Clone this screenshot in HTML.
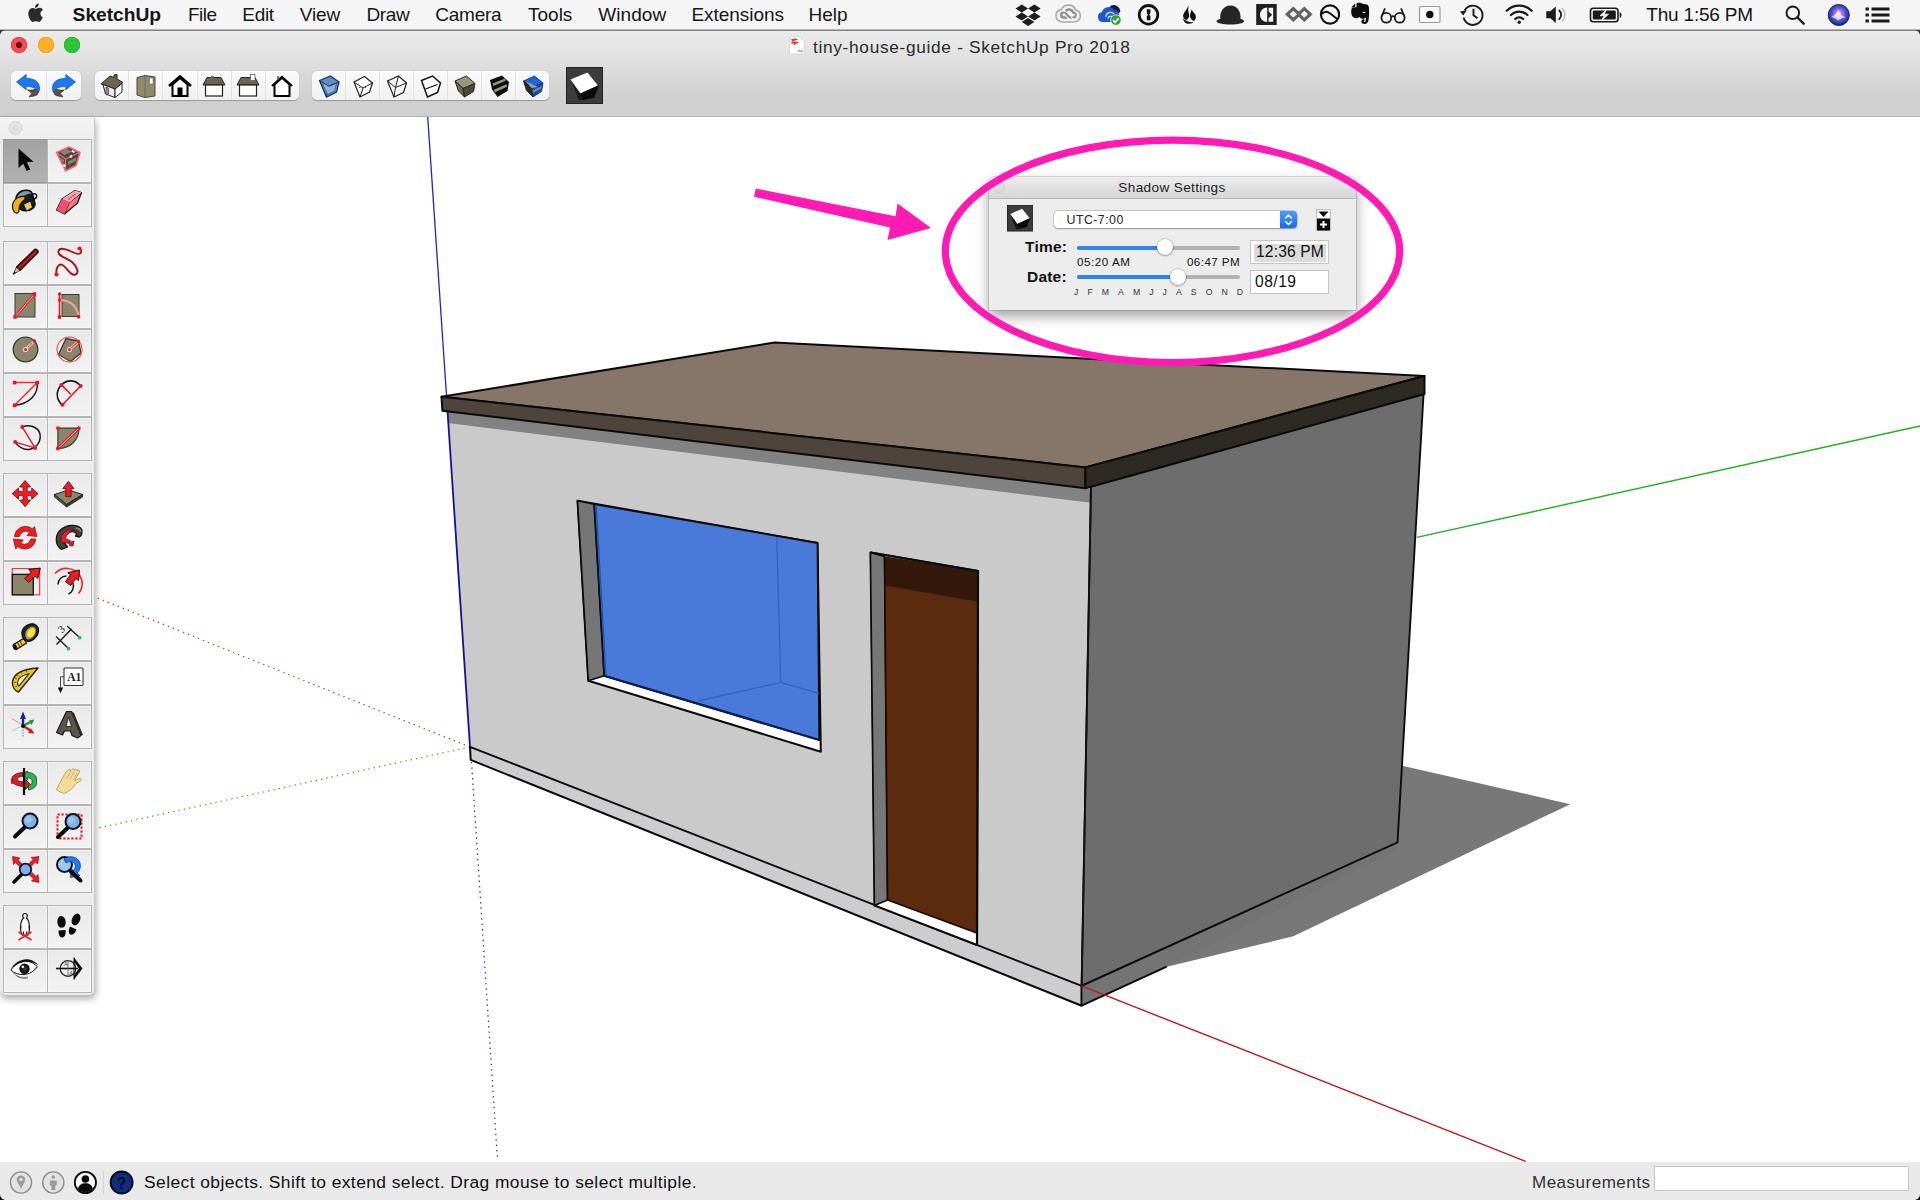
<!DOCTYPE html>
<html lang="en">
<head>
<meta charset="utf-8">
<title>tiny-house-guide - SketchUp Pro 2018</title>
<style>
*{box-sizing:border-box;margin:0;padding:0}
html,body{width:1920px;height:1200px;overflow:hidden;background:#fff;font-family:"Liberation Sans",sans-serif;color:#111}
.abs{position:absolute}
#menubar{position:absolute;left:0;top:0;width:1920px;height:30px;background:#f5f5f5;border-bottom:1px solid #b4b4b4}
#menubar .mi{position:absolute;top:3px;font-size:19px;line-height:24px;color:#151515;white-space:nowrap}
#menubar .mi.b{font-weight:bold}
#titlebar{position:absolute;left:0;top:30px;width:1920px;height:87px;background:linear-gradient(#ebebeb 0,#e3e3e3 22px,#d2d2d2 60px,#cfcfcf 100%);border-bottom:1px solid #b3b3b3;border-top:1px solid #858585}
.tl{position:absolute;top:6px;width:16px;height:16px;border-radius:50%}
#title{position:absolute;left:813px;top:5px;font-size:17.3px;line-height:22px;color:#2a2a2a;white-space:nowrap}
.tbgroup{position:absolute;top:40px;height:29px;border-radius:5px;background:linear-gradient(#fafafa,#f1f1f1);box-shadow:0 0.5px 1px rgba(0,0,0,.28);display:flex}
.tbgroup .c{flex:1;height:100%;border-right:1px solid #e2e2e2;position:relative}
.tbgroup .c:last-child{border-right:none}
.tbgroup svg{position:absolute;left:50%;top:50%;width:30px;height:28px;margin:-14px 0 0 -15px;overflow:visible}
#viewport{position:absolute;left:0;top:0;width:1920px;height:1200px}
#palette{position:absolute;left:0;top:118px;width:95px;height:878px;background:#ececec;border-right:1px solid #c9c9c9;border-bottom:1px solid #bdbdbd;border-radius:0 0 6px 6px;box-shadow:1px 3px 7px rgba(0,0,0,.32)}
#palette .ph{position:absolute;left:0;top:0;width:100%;height:20px;background:linear-gradient(#f4f4f4,#eeeeee)}
.pb{position:absolute;width:44.5px;height:44.5px;background:linear-gradient(#e9e9e9,#f1f1f1 80%,#f3f3f3);box-shadow:inset 0 0 0 1px #b4b4b4, inset 0 0 0 2px rgba(255,255,255,.35)}
.pb.sel{background:linear-gradient(#a2a2a2,#b2b2b2);box-shadow:inset 0 0 0 1px #9a9a9a}
.pb svg{position:absolute;left:0;top:0;width:44px;height:44px;overflow:visible}
#status{position:absolute;left:0;top:1162px;width:1920px;height:38px;background:#e9e9e9}
#status .txt{position:absolute;left:144px;top:8px;font-size:17.4px;line-height:24px;color:#111;white-space:nowrap}
#status .meas{position:absolute;left:1532px;top:9px;font-size:17px;line-height:24px;color:#333;white-space:nowrap}
#status .fld{position:absolute;left:1654px;top:3.500px;width:255px;height:25.500px;background:#fff;border:1px solid #c6c6c6}
#dlg{position:absolute;left:989px;top:177px;width:367px;height:133px;background:#ececec;border-radius:5px 5px 0 0;box-shadow:0 6px 14px rgba(0,0,0,.38),0 0 0 1px rgba(0,0,0,.12)}
#dlg .th{position:absolute;left:0;top:0;width:100%;height:22px;background:linear-gradient(#ececec,#d6d6d6);border-bottom:1px solid #b9b9b9;border-radius:5px 5px 0 0;text-align:center;font-size:13.6px;line-height:22px;color:#222}
#dlg .lbl{position:absolute;font-weight:bold;font-size:15.5px;line-height:18px;color:#111}
#dlg .sm{position:absolute;font-size:11.6px;line-height:14px;color:#111;white-space:nowrap}
#dlg .mo{position:absolute;font-size:8.7px;line-height:10px;color:#333;white-space:nowrap;letter-spacing:0}
#dlg .trk{position:absolute;height:4px;border-radius:2px;background:#b2b2b2}
#dlg .trk i{position:absolute;left:0;top:0;height:4px;border-radius:2px;background:#2f83f0}
#dlg .knob{position:absolute;width:16px;height:16px;border-radius:50%;background:#fff;box-shadow:0 0.5px 2px rgba(0,0,0,.5),0 0 0 .5px rgba(0,0,0,.15)}
#dlg .fld{position:absolute;left:261px;width:79px;height:24px;background:#fff;border:1px solid #c4c4c4;font-size:15.6px;line-height:22px;color:#111;white-space:nowrap}
.corner{position:absolute;width:6px;height:6px}
</style>
</head>
<body>
<svg id="viewport" width="1920" height="1200" viewBox="0 0 1920 1200">
<rect x="0" y="117" width="1920" height="1046" fill="#ffffff"/>
<!-- axes behind model -->
<line x1="427.7" y1="117" x2="447.6" y2="412" stroke="#2323c8" stroke-width="1.3"/>
<line x1="470" y1="746.9" x2="96" y2="597.5" stroke="#d23a3a" stroke-width="1.25" stroke-dasharray="1.4 4"/>
<line x1="470" y1="746.9" x2="96" y2="828.5" stroke="#2fb440" stroke-width="1.25" stroke-dasharray="1.4 4"/>
<line x1="471.5" y1="762" x2="497.5" y2="1160" stroke="#30309c" stroke-width="1.25" stroke-dasharray="1.4 4"/>
<line x1="1416.8" y1="537.4" x2="1920" y2="426" stroke="#1eb31e" stroke-width="1.4"/>
<!-- ground shadow -->
<polygon points="1400,765.2 1570.2,804.2 1293.3,936.3 1166.7,966.7 1081.6,1005.7 1081.6,985.9 1397.5,842.5" fill="#787878"/>
<!-- front wall -->
<polygon points="447.4,408 1091,487 1081.6,985.9 470,746.9" fill="#cacaca"/>
<!-- shadow band under fascia -->
<polygon points="446.8,410.7 1085.4,488.2 1091,489 1090.8,502.8 447.700,423" fill="#828282"/>
<!-- right wall -->
<polygon points="1091,485 1423.8,390 1397.5,842.5 1081.6,985.9" fill="#6d6d6d" stroke="#0d0d0d" stroke-width="1.900" stroke-linejoin="round"/>
<!-- base front -->
<polygon points="470,746.9 1081.6,985.9 1081.6,1005.7 470.7,759.9" fill="#cdcdd0" stroke="#0a0a0a" stroke-width="2" stroke-linejoin="round"/>
<!-- base right -->
<polygon points="1081.6,985.9 1397.5,842.5 1397.5,850 1166.7,966.7 1081.6,1005.7" fill="#747474"/>
<polyline points="1081.6,985.9 1397.5,842.5" fill="none" stroke="#0a0a0a" stroke-width="1.8"/>
<polyline points="1081.6,1005.7 1166.7,966.7" fill="none" stroke="#0a0a0a" stroke-width="2"/>
<line x1="1081.6" y1="985.9" x2="1081.6" y2="1005.7" stroke="#0a0a0a" stroke-width="1.6"/>
<!-- front wall edges -->
<line x1="1091" y1="489" x2="1081.6" y2="985.9" stroke="#111" stroke-width="1.8"/>
<line x1="447.6" y1="412" x2="470" y2="746.9" stroke="#14148c" stroke-width="1.8"/>
<!-- window -->
<polygon points="577.5,500.8 817.5,543 820.8,751.7 588.3,680.8" fill="#ffffff" stroke="#0a0a0a" stroke-width="2" stroke-linejoin="round"/>
<polygon points="577.5,500.8 594.2,504.2 604.2,675.8 588.3,680.8" fill="#767676" stroke="#0a0a0a" stroke-width="1.6" stroke-linejoin="round"/>
<polygon points="594.2,504.2 817.5,543 819.3,740 604.2,675.8" fill="#4a7ad9" stroke="#0a0a0a" stroke-width="1.8" stroke-linejoin="round"/>
<polyline points="596.2,506 606,675" fill="none" stroke="#1d4fb5" stroke-width="1.2"/>
<polyline points="776.7,537 780.8,682.5 698.3,700.8" fill="none" stroke="#2f5fc6" stroke-width="1.2"/>
<line x1="780.8" y1="682.5" x2="819.2" y2="693.3" stroke="#2f5fc6" stroke-width="1.2"/>
<line x1="604.2" y1="675.8" x2="819.3" y2="740" stroke="#0b1f55" stroke-width="2.2"/>
<!-- door -->
<polygon points="870.5,552.5 978,571 977,945 874.5,905.5" fill="#ffffff" stroke="#0a0a0a" stroke-width="2" stroke-linejoin="round"/>
<polygon points="870.5,552.5 884.5,556.5 887.5,900 874.5,905.5" fill="#777777" stroke="#0a0a0a" stroke-width="1.4" stroke-linejoin="round"/>
<polygon points="884.5,556.5 978,571 976.8,933 887.5,900" fill="#5c2a0e"/>
<polygon points="884.5,556.5 978,571 977.6,601.5 884.7,585.5" fill="#341809"/>
<polyline points="884.5,556.5 887.5,900 976.800,933" fill="none" stroke="#120702" stroke-width="1.600"/>
<polyline points="870.5,552.5 978,571 977,945" fill="none" stroke="#0a0a0a" stroke-width="2.2" stroke-linejoin="round"/>
<!-- roof -->
<polygon points="441.5,396.7 774.5,342.5 1424.5,376 1085.4,467.4" fill="#86766a" stroke="#0a0a0a" stroke-width="2" stroke-linejoin="round"/>
<polygon points="441.5,396.7 1085.4,467.4 1085.4,488.2 442.4,410.7" fill="#4e443b" stroke="#0a0a0a" stroke-width="2" stroke-linejoin="round"/>
<polygon points="1085.4,467.4 1424.5,376 1424.5,394 1085.4,488.2" fill="#2d2923" stroke="#0a0a0a" stroke-width="2" stroke-linejoin="round"/>
<!-- red axis in front -->
<line x1="1081.6" y1="985.9" x2="1525.6" y2="1161.3" stroke="#c01818" stroke-width="1.4"/>
</svg>

<div id="menubar">
<svg class="abs" style="left:27px;top:2px" width="19" height="22" viewBox="0 0 19 22"><path d="M13.1 0.4c.1 1.1-.3 2.200-1 3-.7.800-1.800 1.400-2.800 1.300-.1-1.100.4-2.200 1-2.900.700-.800 1.900-1.400 2.800-1.400zM16.600 7.400c-.1.100-1.900 1.100-1.900 3.300 0 2.600 2.300 3.500 2.300 3.500 0 .1-.4 1.300-1.200 2.500-.700 1.100-1.500 2.200-2.700 2.200s-1.500-.7-2.900-.7c-1.300 0-1.800.7-2.900.7s-1.900-1-2.800-2.300C3.500 15.100 2.600 12.700 2.600 10.400c0-3.700 2.400-5.600 4.700-5.600 1.200 0 2.300.8 3 .8.700 0 1.900-.9 3.300-.9.500 0 2.400.100 3.600 1.900z" fill="#2b2b2b" transform="translate(-1.300 1.100)"/></svg>
<span class="mi b" style="left:72.6px;font-size:19.2px">SketchUp</span>
<span class="mi" style="left:188px;letter-spacing:-.5px">File</span>
<span class="mi" style="left:242.300px;letter-spacing:-.3px">Edit</span>
<span class="mi" style="left:299.800px;letter-spacing:-.15px">View</span>
<span class="mi" style="left:366.500px;letter-spacing:-.400px">Draw</span>
<span class="mi" style="left:435.300px;letter-spacing:-.25px">Camera</span>
<span class="mi" style="left:528px">Tools</span>
<span class="mi" style="left:598.200px;letter-spacing:.08px">Window</span>
<span class="mi" style="left:691.500px;letter-spacing:-.06px">Extensions</span>
<span class="mi" style="left:808.500px">Help</span>
<span class="mi" style="left:1646.300px;letter-spacing:-.2px">Thu 1:56 PM</span>
<!-- status icons -->
<svg class="abs" style="left:1010px;top:0" width="900" height="30" viewBox="1010 0 900 30">
<!-- dropbox -->
<g fill="#1d1d1d"><path d="M1021.800 4.600l6.300 4-6.300 4-6.300-4zM1034.400 4.600l6.300 4-6.300 4-6.300-4zM1015.500 16.600l6.300-4 6.300 4-6.300 4zM1034.400 12.600l6.300 4-6.300 4-6.300-4zM1021.800 21.900l6.300-4 6.300 4-6.300 4z"/></g>
<!-- creative cloud (gray) -->
<path d="M1062.800 22c-3.800 0-6.800-2.800-6.800-6.300 0-3 2.200-5.500 5.200-6.100 1.300-2.700 4-4.500 7.200-4.500 3.300 0 6.100 2 7.300 4.800 2.700.8 4.600 3.200 4.600 6 0 3.400-2.800 6.100-6.300 6.100z" fill="#f3f3f3" stroke="#adadad" stroke-width="1.700"/>
<path d="M1063.300 18.800a3.700 3.700 0 0 1-.5-7.300c1.800-.3 3.300.5 4.500 1.800l5 5.300c-1.200.3-2.800.2-3.800-.8l-3.800-4c-.8-.8-2.200-.3-2.200 1 0 1 .7 1.500 1.500 1.500h1.500l2.200 2.500zM1073.500 18.500c2-.2 3.400-1.700 3.400-3.600 0-1.700-1.200-3.200-2.900-3.500-1-2.300-3.200-3.400-5.400-3.200-1.500.2-2.700.8-3.600 1.800l1.800 1.900c.8-.9 2-1.400 3.200-1 1.300.4 2.200 1.500 2.300 2.800l1.300.1c.7.1 1.200.6 1.200 1.300s-.6 1.300-1.300 1.300h-2.300z" fill="#8f8f8f"/>
<!-- blue cloud w/ check -->
<path d="M1108 9.500c1-3 4-5 7-4.300 3.300.7 5.500 3.500 5.300 6.800l-5 3z" fill="#0d1f4f"/>
<path d="M1102.800 22a5 5 0 0 1-.8-9.900a6.700 6.700 0 0 1 12-2.200c3 .2 5.200 2.300 5.200 5.200 0 1-.2 1.800-.6 2.500l-3.600 4.400z" fill="#1d56d6"/>
<path d="M1106 16.800a4.500 4.500 0 0 1 7.800-3M1108 18.500a2.600 2.600 0 0 1 4.200-1.700" fill="none" stroke="#e6efff" stroke-width="1.300"/>
<circle cx="1115.900" cy="20" r="5.300" fill="#2aa82a" stroke="#f3f3f3" stroke-width=".8"/>
<path d="M1113 20.200l2.100 2.200 3.600-4.200" fill="none" stroke="#fff" stroke-width="1.700"/>
<!-- 1password -->
<circle cx="1148.500" cy="14.800" r="9.300" fill="none" stroke="#111" stroke-width="2.800"/>
<path d="M1146.800 9.300h3.600v4l-1.200 1.300 1.200 1.300v4.400h-3.600v-4.100l1.200-1.300-1.200-1.300z" fill="#111"/>
<!-- flame -->
<path d="M1187.800 4.200c.8 2.500-.5 4.200-2.300 6.500-1.800 2.300-3 4.500-2 7 .6 1.300 1.700 2 3.300 2.400 1.800-1.500 2.600-3.300 2.300-5.500-.3-2.200-1.200-3.800-.8-5.800.2-1.500.2-3-.5-4.600z" fill="#111"/>
<path d="M1191.300 9.200c.2 1.800-.5 3-1 4.500-.6 1.800-.3 3.800.8 5.300.7 1 1.800 1.800 3 1.800 1.500-1.300 2.100-3 1.600-5.200-.5-2.300-3.200-3.800-4.400-6.400z" fill="#111"/>
<path d="M1183 18.500c.3 3 2.800 5.300 6 5.300 2.200 0 3.800-.8 4.800-2-3 .8-6.300.3-8.300-1.500-1-.6-1.900-1.200-2.500-1.800z" fill="#111"/>
<path d="M1186.500 21.300c1.500.8 3.200 1 5 .6-.8.800-1.800 1.200-3 1.100-.8-.1-1.600-.7-2-1.700z" fill="#111"/>
<!-- hat -->
<path d="M1220.300 19c-.8-7 3-13.500 10.200-13.500s10.800 6.500 10 13.500c2 .4 3.600 1.200 3.600 2.300 0 2-6.200 3.200-13.700 3.200s-13.900-1.200-13.900-3.200c0-1.100 1.700-1.900 3.800-2.300z" fill="#262626"/>
<!-- square dark icon -->
<rect x="1256.200" y="4" width="20.500" height="21" fill="#1f1f1f"/>
<path d="M1267.200 7.500v14.500c-4.200 0-7.200-3.200-7.200-7.200s3-7.300 7.200-7.300z" fill="#f6f6f6"/>
<path d="M1268.600 7.800h4.600v14h-4.600v-3.500l3.500-3.500-3.500-3.500z" fill="#f6f6f6"/>
<!-- link gray -->
<path d="M1287.300 14.200l6-5.600 5.500 5.200 5.500-5.200 6 5.600-6 5.600-5.500-5.200-5.500 5.200z" fill="none" stroke="#636363" stroke-width="3.200" stroke-linejoin="miter"/>
<!-- circle arc -->
<circle cx="1330" cy="14.500" r="9.100" fill="none" stroke="#111" stroke-width="2.100"/>
<path d="M1321.800 14c2.500-2.800 5.500-3 8.500-.5l7.500 6" fill="none" stroke="#111" stroke-width="1.900"/>
<!-- evernote -->
<path d="M1356.500 3.300c2-.8 5-.6 6.500.8 1.200-.2 3.200 0 4.500.7 1 .6 1.400 2 1.500 4 .2 3.500.2 8-.5 11.500-.4 2-1.500 3.500-3.500 3.600-1.800.1-3.200-.3-3.600-1.600-.3-1.200.3-2.600 1.500-3 .9-.2 1.700.3 1.700 1.100 0 .6-.5 1-1.200.9.100.6.700.8 1.300.7.800-.2 1.100-1 1.100-2v-2.500c-.8 1-2 1.300-3.400 1.200-1.200 0-2.200-.6-2.600-1.600-1.300 1-3.200 1.400-5 .9-2.300-.6-3.300-2.500-3.500-5-.2-2 0-4 .7-5.600l3.700-.2c.6 0 .9-.3.900-.9z" fill="#0d0d0d"/>
<path d="M1351.400 7.200l3.800-3.800.1 3c0 .4-.3.700-.7.700z" fill="#0d0d0d"/>
<rect x="1362.800" y="11.800" width="2.600" height="1.100" fill="#f3f3f3"/>
<!-- glasses -->
<g fill="none" stroke="#1b1b1b" stroke-width="1.800"><circle cx="1386.300" cy="17.800" r="4.900"/><circle cx="1399.700" cy="17.800" r="4.900"/><path d="M1391.200 17c1-1.200 2.600-1.200 3.600 0M1381.600 16.500l3.400-8.200M1404.400 16.500l-3.400-8.200"/></g>
<!-- record -->
<rect x="1419.500" y="6.500" width="20.500" height="16" rx="1.500" fill="#fafafa" stroke="#9a9a9a" stroke-width="1.200"/>
<circle cx="1429.800" cy="14.500" r="3.700" fill="#111"/>
<!-- time machine -->
<g fill="none" stroke="#1b1b1b" stroke-width="1.900"><path d="M1464.600 10.500a9.600 9.600 0 1 1-1 7"/><path d="M1473.500 8.800v6.500l4 3"/></g>
<path d="M1460 11.500l6.800-1.200-3.600 5.200z" fill="#1b1b1b"/>
<!-- wifi -->
<g fill="none" stroke="#1b1b1b" stroke-width="2.300" stroke-linecap="round"><path d="M1506.800 10.800a17.500 17.500 0 0 1 24.800 0"/><path d="M1511 15a11.500 11.500 0 0 1 16.400 0"/><path d="M1515.200 19a5.600 5.600 0 0 1 8 0"/></g>
<circle cx="1519.200" cy="22.300" r="1.700" fill="#1b1b1b"/>
<!-- volume -->
<path d="M1546.300 11.300h4l5.500-4.800v16.500l-5.500-4.800h-4z" fill="#1b1b1b"/>
<path d="M1559.300 10.500a6 6 0 0 1 0 8.600" fill="none" stroke="#1b1b1b" stroke-width="1.800" stroke-linecap="round"/>
<path d="M1562.500 8.500a9.500 9.500 0 0 1 0 12.500" fill="none" stroke="#bdbdbd" stroke-width="1.600" stroke-linecap="round"/>
<!-- battery -->
<rect x="1590.500" y="8.300" width="27.500" height="13.500" rx="2.800" fill="none" stroke="#1b1b1b" stroke-width="1.600"/>
<path d="M1619.700 12.200c1.300.3 1.800 1.300 1.800 2.800s-.5 2.500-1.800 2.800z" fill="#1b1b1b"/>
<rect x="1592.800" y="10.600" width="23" height="8.900" rx="1.200" fill="#1b1b1b"/>
<path d="M1606.500 9.500l-6.500 6.200h4.200l-2.700 5 7-6.500h-4.300z" fill="#f3f3f3" stroke="#f3f3f3" stroke-width=".8"/>
<!-- search -->
<circle cx="1792.800" cy="12.800" r="6.300" fill="none" stroke="#1b1b1b" stroke-width="2"/>
<path d="M1797.500 17.500l6.200 6.200" stroke="#1b1b1b" stroke-width="2.400" stroke-linecap="round"/>
<!-- siri -->
<defs><radialGradient id="siri" cx=".5" cy=".45" r=".6"><stop offset="0" stop-color="#fff"/><stop offset=".25" stop-color="#d86bd0"/><stop offset=".55" stop-color="#3c5be0"/><stop offset="1" stop-color="#12124a"/></radialGradient></defs>
<circle cx="1838.800" cy="15" r="10.600" fill="url(#siri)" stroke="#1a1a3a" stroke-width=".8"/>
<path d="M1831 17c3-1 5-3 7.500-7.500 1 5 3.500 7 8 7.800-4 .5-6.500 1-8.500 3.500-1.500-2.500-4-3.300-7-3.800z" fill="#ffffff" opacity=".75"/>
<!-- list -->
<g fill="#1b1b1b"><rect x="1865.500" y="7.500" width="3.400" height="3"/><rect x="1865.500" y="13.500" width="3.400" height="3"/><rect x="1865.500" y="19.500" width="3.400" height="3"/><rect x="1871.500" y="7.500" width="18" height="3"/><rect x="1871.500" y="13.500" width="18" height="3"/><rect x="1871.500" y="19.500" width="18" height="3"/></g>
</svg>
</div>

<div id="titlebar">
<div class="tl" style="left:10.700px;background:#fc4a4d;box-shadow:inset 0 0 0 .6px #d93236"><i style="position:absolute;left:5px;top:5px;width:6px;height:6px;border-radius:50%;background:#5a0d0d"></i></div>
<div class="tl" style="left:37.500px;background:#fdb225;box-shadow:inset 0 0 0 .6px #dd9a1c"></div>
<div class="tl" style="left:64.100px;background:#29c732;box-shadow:inset 0 0 0 .6px #1da926"></div>
<svg class="abs" style="left:788px;top:5px" width="18" height="19" viewBox="0 0 18 19"><path d="M1.500.5h10l5 5v12.500h-15z" fill="#fdfdfd" stroke="#cfcfcf" stroke-width=".8"/><path d="M3 3.500c3-1.500 6-1 7 .5-2 0-4 .5-5 1.500 2-.3 4.500 0 6 1.500-2.500 0-4 1-4.500 2.500l-1-2c-1 .2-2 .1-3-.5 1-.5 1.800-1 2-1.800-.8-.4-1.300-1-1.500-1.700z" fill="#e5342e"/><text x="9" y="15.500" font-family="Liberation Sans, sans-serif" font-size="4" fill="#666">skp</text></svg>
<div id="title"><span style="font-size:17.300px;letter-spacing:.68px">tiny-house-guide - SketchUp Pro 2018</span></div>
<!-- group 1 -->
<div class="tbgroup" style="left:11px;width:70px">
<div class="c"><svg viewBox="0 0 30 28"><path d="M14.500 17.800c4.500.8 8.500 0 11.300-3 .6 3.200-.2 6-2 8.200-2 1-4.500 1.600-7.800 1.800l2.800-3.300z" fill="#5e5243" stroke="#2a241c" stroke-width=".6" stroke-linejoin="round"/><path d="M3.500 10l9.700-7.600v4.100c8-.5 13.300 3.500 13.300 9.500 0 1.800-.4 3.300-1.200 4.800-1-4-5-6.500-12.100-6.300v3.300z" fill="#1b78f2" stroke="#0f4fae" stroke-width=".7" stroke-linejoin="round"/></svg></div>
<div class="c"><svg viewBox="0 0 30 28"><path d="M15.500 17.800c-4.500.8-8.500 0-11.300-3-.6 3.200.2 6 2 8.200 2 1 4.500 1.600 7.800 1.800l-2.800-3.300z" fill="#5e5243" stroke="#2a241c" stroke-width=".6" stroke-linejoin="round"/><path d="M26.500 10l-9.700-7.600v4.100c-8-.5-13.300 3.500-13.300 9.500 0 1.800.4 3.300 1.200 4.800 1-4 5-6.500 12.100-6.300v3.300z" fill="#1b78f2" stroke="#0f4fae" stroke-width=".7" stroke-linejoin="round"/></svg></div>
</div>
<!-- group 2 -->
<div class="tbgroup" style="left:95px;width:204px">
<div class="c"><svg viewBox="0 0 30 28"><path d="M4 12l9-8 4 1.500v-2.500l3-.5v4.500l6 3.500-8 6.500z" fill="#6e6353" stroke="#222" stroke-width="1"/><path d="M6 12.500l2.500 9.500 9.500 3.500v-8.500z" fill="#f4f4f4" stroke="#222" stroke-width="1"/><path d="M18 17l7-5.500v8.500l-7 5.500z" fill="#fff" stroke="#222" stroke-width="1"/><path d="M9 15l2.500 1v6l-2.500-1z" fill="#999" stroke="#222" stroke-width=".6"/></svg></div>
<div class="c"><svg viewBox="0 0 30 28"><path d="M6 5.500l8-2 10 1.500v19l-10 1.500-8-2.500z" fill="#8e8a6e" stroke="#4a4638" stroke-width="1"/><path d="M14 3.500v22" stroke="#6a664f" stroke-width=".8"/><rect x="18.500" y="6" width="3.500" height="6" fill="#fff" stroke="#555" stroke-width=".5"/></svg></div>
<div class="c"><svg viewBox="0 0 30 28"><path d="M4 14l11-9.500 11 9.500" fill="none" stroke="#000" stroke-width="2.600" stroke-linejoin="miter"/><path d="M7.500 12.500v11.500h15v-11.500l-7.500-6.500z" fill="#fff" stroke="#000" stroke-width="2"/><rect x="12.500" y="15.500" width="5" height="8.500" fill="#000"/></svg></div>
<div class="c"><svg viewBox="0 0 30 28"><path d="M4 13l4-7.500h14l4 7.500z" fill="#6e6353" stroke="#2c261e" stroke-width="1"/><rect x="6.500" y="13" width="17" height="11" fill="#fff" stroke="#222" stroke-width="1.200"/><rect x="12" y="3.800" width="3" height="2" fill="#777"/></svg></div>
<div class="c"><svg viewBox="0 0 30 28"><path d="M4 13l4-7.500h14l4 7.500z" fill="#6e6353" stroke="#2c261e" stroke-width="1"/><rect x="6.500" y="13" width="17" height="11" fill="#fff" stroke="#222" stroke-width="1.200"/><rect x="17.500" y="2.500" width="4.500" height="6" fill="#fff" stroke="#555" stroke-width=".7"/></svg></div>
<div class="c"><svg viewBox="0 0 30 28"><path d="M5 14l10-9 10 9" fill="none" stroke="#000" stroke-width="2.200"/><path d="M7.500 12.500v11.500h15v-11.500l-7.500-6.800z" fill="#fff" stroke="#000" stroke-width="2"/><path d="M11 4v4" stroke="#555" stroke-width="1.600"/></svg></div>
</div>
<!-- group 3 -->
<div class="tbgroup" style="left:312px;width:237px">
<div class="c"><svg viewBox="0 0 30 28"><path d="M5.500 8.500l11-4.500 8.500 6-2.500 10-10 5z" fill="#5d8fc4" stroke="#17355c" stroke-width="1.300"/><path d="M5.500 8.500l9 5.500 10.500-4M14.500 14l-2 11" fill="none" stroke="#17355c" stroke-width="1"/><path d="M8 10.500l7 4 7.500-3-2 7.500-7 3.500z" fill="#8db5df" stroke="#24486f" stroke-width=".6"/></svg></div>
<div class="c"><svg viewBox="0 0 30 28"><path d="M6 10l10.500-5.500 8 6.500-3 9-9.500 5z" fill="#fff" stroke="#222" stroke-width="1.200"/><path d="M6 10l9 6 9.500-5M15 16l-3 9" fill="none" stroke="#222" stroke-width="1"/><path d="M11 15.500h7" stroke="#444" stroke-width="1" stroke-dasharray="1.500 1.500"/></svg></div>
<div class="c"><svg viewBox="0 0 30 28"><path d="M5.500 9l11-5 8 7-3 9.500-9.500 4.500z" fill="#fdfdfd" stroke="#222" stroke-width="1.200"/><path d="M5.500 9l8 6.500 11-4.500M13.500 15.500l-1.500 9.500M16.500 4l-3 11.500" fill="none" stroke="#222" stroke-width="1"/></svg></div>
<div class="c"><svg viewBox="0 0 30 28"><path d="M5.500 8.500l11-4.500 8 7-3 9.500-10 4.500z" fill="#fff" stroke="#111" stroke-width="1.500"/><path d="M9.500 17l12-4.500" fill="none" stroke="#111" stroke-width="1.200"/></svg></div>
<div class="c"><svg viewBox="0 0 30 28"><path d="M5 9l11.500-5 8.500 7.500-12 5z" fill="#9a9479" stroke="#2a271c" stroke-width="1"/><path d="M5 9l8 7.500 1.500 8.500-6-6z" fill="#6f6a52" stroke="#2a271c" stroke-width="1"/><path d="M13 16.500l12-5-1.500 8-9 5.500z" fill="#4e4a38" stroke="#2a271c" stroke-width="1"/></svg></div>
<div class="c"><svg viewBox="0 0 30 28"><path d="M6 8l12-4.500 7 6.500-1.500 9-10 6-5.500-7.500z" fill="#0c0c0c"/><path d="M8.500 11.500l12.500-5 .8 2.300-12.500 5.200zM10 17.800l12.500-5.500.5 2.500-12.300 5.700z" fill="#9a9479"/></svg></div>
<div class="c"><svg viewBox="0 0 30 28"><path d="M5.500 9l11-5 8.500 7-11.500 5z" fill="#1b66e0" stroke="#0b2a66" stroke-width=".8"/><path d="M5.500 9l8 7 1.500 9-6.500-6.500z" fill="#2d2a22" stroke="#111" stroke-width=".8"/><path d="M13.500 16l11.500-5-1.500 8.500-8.500 5.500z" fill="#0e4fb8" stroke="#0b2a66" stroke-width=".8"/><path d="M8 9.500l12 5.500-6.500 1z" fill="#a59f84"/><path d="M14.500 18.500l9-4.200-.5 2.500-8.300 4z" fill="#8d876d"/></svg></div>
</div>
<!-- shadow icon -->
<svg class="abs" style="left:566px;top:36px" width="37" height="37" viewBox="0 0 37 37"><rect x=".5" y=".5" width="36" height="36" fill="#3c3c3c" stroke="#222" stroke-width="1"/><path d="M5 13l17-6.500 11 12.500-5 12-15 2.500z" fill="#1a1a1a"/><path d="M4.500 12.500l17-7 10.500 13-17.500 8z" fill="#fff"/><path d="M14.500 26.500l17.500-8-4 12-11 2.500z" fill="#0a0a0a"/></svg>
</div>

<div id="palette"><div class="ph"><svg width="95" height="20" viewBox="0 0 95 20" style="position:absolute;left:0;top:0"><circle cx="15.500" cy="10" r="6.500" fill="#e3e3e3" stroke="#d2d2d2" stroke-width="1"/><circle cx="15.500" cy="10" r="2.500" fill="none" stroke="#d8d8d8" stroke-width="1"/></svg></div>
<div class="pb sel" style="left:3px;top:20.5px"><svg viewBox="0 0 44 44"><path d="M15.500 9.500l0 19.500 4.800-4.300 3.300 7.300 3.600-1.600-3.300-7.200 6.600-.5z" fill="#0a0a0a"/></svg></div>
<div class="pb" style="left:47.25px;top:20.5px"><svg viewBox="0 0 44 44"><path d="M9.500 13.500l12.500-5.500 11 5.500-4 13-10.500 5.500z" fill="#4a4940" stroke="#f26a7a" stroke-width="1.600" stroke-linejoin="round"/><path d="M9.500 13.500l9 6.500 14-6.500M18.500 20l0 12" fill="none" stroke="#f26a7a" stroke-width="1.200"/><path d="M13 13l7-3 5 2.500-7.500 3.500z" fill="#8a866b"/><path d="M12.500 18l4.500 3v3l-4-3z" fill="#8a866b"/><path d="M21 22.500l8.500-4-1 3.500-7.500 4z" fill="#8a866b"/><circle cx="17" cy="26.500" r="1.500" fill="#fff"/><circle cx="24" cy="17.500" r="1.300" fill="#fff"/><path d="M25 11l3 1.500-1 1.500-2.500-1.300z" fill="#fff"/></svg></div>
<div class="pb" style="left:3px;top:64.5px"><svg viewBox="0 0 44 44"><path d="M13 17c-1-5 4-10 10-10 4 0 6 2 6.500 4l2.500 9c1 4-4 8-9 8-4 0-7-2-7.500-4z" fill="#1b1a22" stroke="#000" stroke-width="1.200"/><path d="M14 15c1-4 5-7 9-7 3 0 5 1.200 5.500 2.500-3 0-8 1.500-11 5z" fill="#7d99ad"/><path d="M20.500 21.500l7-3.500 2 6.500-6 3.500z" fill="#e6c978" stroke="#000" stroke-width=".8"/><path d="M29 11.500c3-2 5.500 0 4.500 2.500-.5 1.500-2 2-3 2" fill="none" stroke="#111" stroke-width="1.500"/><path d="M22 13.500c-6-1-12 3-12.500 9-.3 4 1.500 7 3.500 7.500 1.500.3 3-.5 3-2.500 0-3 1-7 4-9.500 1.500-1.200 3-2 2-4.500z" fill="#f3b012" stroke="#111" stroke-width="1.200"/></svg></div>
<div class="pb" style="left:47.25px;top:64.5px"><svg viewBox="0 0 44 44"><path d="M9.500 27l5.500-11 13-8.500 6.500 2-4 10.500-13 11z" fill="#f4768a" stroke="#1a1a1a" stroke-width="1.300" stroke-linejoin="round"/><path d="M15 16l7.500 3.500 12-9.500M22.500 19.500l-5 11.500" fill="none" stroke="#1a1a1a" stroke-width="1"/><path d="M9.500 27l5.500-11 7.500 3.500-5 11.500z" fill="#f0506a"/><path d="M15 16l13-8.500 6.500 2-12 10z" fill="#f8a3b0"/><path d="M21.500 16.500l7-5.500" stroke="#b03a4c" stroke-width="1.400" stroke-dasharray="1.500 1"/></svg></div>
<div class="pb" style="left:3px;top:122.5px"><svg viewBox="0 0 44 44"><path d="M10 33.500l3.500-7.500 3.800 3.300z" fill="#d9b98a" stroke="#222" stroke-width=".7"/><path d="M10 33.500l1.500-3 1.500 1.300z" fill="#111"/><path d="M13.500 26l18-17.500c1.500-1.200 4.500 1.500 3.500 3l-17.700 17.800z" fill="#8c0f12" stroke="#150303" stroke-width="1.100"/><path d="M15.500 27.500l18-17.500" stroke="#d9393d" stroke-width="1"/></svg></div>
<div class="pb" style="left:47.25px;top:122.5px"><svg viewBox="0 0 44 44"><path d="M9.500 33.500c-1-6 2-11.500 6-9.500 4.500 2.500 8 11.500 13 9.500 4-1.500 1.500-8-3.500-12.500-5-4-15-6-13.500-11 1.500-4.500 10-1 15 1.500 6 3 10 .5 6.500-4" fill="none" stroke="#a5151a" stroke-width="1.900" stroke-linecap="round"/><circle cx="9.500" cy="33.500" r="2.100" fill="#e8151b"/><circle cx="32.500" cy="7.500" r="2.100" fill="#e8151b"/></svg></div>
<div class="pb" style="left:3px;top:166.5px"><svg viewBox="0 0 44 44"><rect x="12" y="8.500" width="20" height="23.500" fill="#8a866b" stroke="#3d3b2e" stroke-width="1"/><path d="M12 32l19.500-23" stroke="#e8151b" stroke-width="2.600"/><path d="M12 32l19.500-23" stroke="#ffc9cc" stroke-width=".9"/><rect x="10.300" y="30.300" width="3.400" height="3.400" fill="#e8151b"/><rect x="29.800" y="7.300" width="3.400" height="3.400" fill="#e8151b"/></svg></div>
<div class="pb" style="left:47.25px;top:166.5px"><svg viewBox="0 0 44 44"><rect x="15" y="9.500" width="17" height="22" fill="#8a866b" stroke="#3d3b2e" stroke-width="1"/><path d="M12.500 15c10 0 18 6 19 16.500" fill="none" stroke="#f5a3a8" stroke-width="2"/><path d="M12.500 9v23" stroke="#e8151b" stroke-width="1.600"/><circle cx="12.500" cy="9" r="1.700" fill="#e8151b"/><circle cx="12.500" cy="15" r="1.700" fill="#e8151b"/><circle cx="12.500" cy="32" r="1.900" fill="#e8151b"/><circle cx="31.500" cy="31.700" r="1.900" fill="#e8151b"/></svg></div>
<div class="pb" style="left:3px;top:210.5px"><svg viewBox="0 0 44 44"><circle cx="22.500" cy="20.500" r="12.300" fill="#8a866b" stroke="#3d3b2e" stroke-width="1.300"/><path d="M22.500 20.500l9-8.500" stroke="#f7b5b8" stroke-width="2.600"/><path d="M22.500 20.500l9-8.500" stroke="#e8151b" stroke-width="1" stroke-dasharray="2 1.500"/><circle cx="22.500" cy="20.500" r="2.600" fill="#ffd0d3"/><circle cx="22.500" cy="20.500" r="1.500" fill="#e8151b"/><circle cx="31.500" cy="12" r="1.700" fill="#e8151b"/></svg></div>
<div class="pb" style="left:47.25px;top:210.5px"><svg viewBox="0 0 44 44"><path d="M19 9.500l12.500 2.500 2.500 12-10.500 8.500-12-7z" fill="#8a866b" stroke="#3d3b2e" stroke-width="1.300" stroke-linejoin="round"/><circle cx="22.500" cy="20.500" r="12.500" fill="none" stroke="#ee4a52" stroke-width="1.100"/><path d="M22.500 20.500l9-8" stroke="#f7b5b8" stroke-width="2.600"/><path d="M22.500 20.500l9-8" stroke="#e8151b" stroke-width="1"/><circle cx="22.500" cy="20.500" r="2.600" fill="#ffd0d3"/><circle cx="22.500" cy="20.500" r="1.500" fill="#e8151b"/><circle cx="31.500" cy="12.500" r="1.700" fill="#e8151b"/></svg></div>
<div class="pb" style="left:3px;top:254.5px"><svg viewBox="0 0 44 44"><path d="M34.300 9.600c1 12-8 21.500-22.700 22.700" fill="none" stroke="#1a1a1a" stroke-width="1.500"/><path d="M11.600 9.600h22.700l-22.700 22.700" fill="none" stroke="#ee2a31" stroke-width="1.500"/><rect x="9.800" y="7.800" width="3.600" height="3.600" fill="#e8151b"/><rect x="32.500" y="7.800" width="3.600" height="3.600" fill="#e8151b"/><rect x="9.800" y="30.500" width="3.600" height="3.600" fill="#e8151b"/></svg></div>
<div class="pb" style="left:47.25px;top:254.5px"><svg viewBox="0 0 44 44"><path d="M15.500 31.700c-6-4-7.500-13-1.100-19.800 6-6 14.500-5 19.200 1.100" fill="none" stroke="#1a1a1a" stroke-width="1.600"/><path d="M33.600 13l-18.100 18.700M14.400 11.900l9.300 9.300" fill="none" stroke="#e8151b" stroke-width="1.500"/><circle cx="14.400" cy="11.900" r="2" fill="#e8151b"/><circle cx="33.600" cy="13" r="2" fill="#e8151b"/><circle cx="15.500" cy="31.700" r="2" fill="#e8151b"/></svg></div>
<div class="pb" style="left:3px;top:298.5px"><svg viewBox="0 0 44 44"><path d="M19.200 9.900c9-3.500 19 1.500 18 11-1 10.500-15 17.500-25 4.200" fill="none" stroke="#1a1a1a" stroke-width="1.500"/><path d="M19.200 9.900l12.800 21-19.800-5.800" fill="none" stroke="#e8151b" stroke-width="1.400"/><circle cx="19.200" cy="9.900" r="2" fill="#e8151b"/><circle cx="12.200" cy="25.100" r="2" fill="#e8151b"/><circle cx="32" cy="30.900" r="2.100" fill="#e8151b"/></svg></div>
<div class="pb" style="left:47.25px;top:298.5px"><svg viewBox="0 0 44 44"><path d="M10.900 11.100h21c.5 11.500-8 20-21 20.400z" fill="#8a866b" stroke="#3d3b2e" stroke-width="1.200"/><path d="M31.900 11.100l-21 20.400" stroke="#e8151b" stroke-width="2.800"/><path d="M31.900 11.100l-21 20.400" stroke="#ffc9cc" stroke-width="1"/><circle cx="10.900" cy="11.100" r="1.900" fill="#e8151b"/><circle cx="31.900" cy="11.100" r="1.900" fill="#e8151b"/><circle cx="10.900" cy="31.500" r="1.900" fill="#e8151b"/></svg></div>
<div class="pb" style="left:3px;top:354.5px"><svg viewBox="0 0 44 44"><path d="M22.100 7.500l5.500 6.500h-3.300v4.400h4.400v-3.400l6.300 5.600-6.300 5.600v-3.400h-4.400v4.400h3.300l-5.500 6.500-5.500-6.500h3.300v-4.400h-4.400v3.400l-6.300-5.600 6.300-5.600v3.400h4.400v-4.400h-3.300z" fill="#ee1c23" stroke="#6a0a0c" stroke-width=".8" stroke-linejoin="round"/><rect x="17" y="15.500" width="2.400" height="2.400" fill="#fff"/><rect x="24.800" y="15.500" width="2.400" height="2.400" fill="#fff"/><rect x="17" y="23.300" width="2.400" height="2.400" fill="#fff"/><rect x="24.800" y="23.300" width="2.400" height="2.400" fill="#fff"/></svg></div>
<div class="pb" style="left:47.25px;top:354.5px"><svg viewBox="0 0 44 44"><path d="M7.400 21.500l14-4.500 14.200 4.500-16 10z" fill="#8a866b" stroke="#222" stroke-width="1"/><path d="M7.400 21.500v2.500l12.200 10v-2.500z" fill="#55523f" stroke="#222" stroke-width=".8"/><path d="M19.600 31.500l16-10v2.500l-16 10z" fill="#3f3d2f" stroke="#222" stroke-width=".8"/><path d="M21.400 8.400l5.600 7.200h-3v8h-5.200v-8h-3z" fill="#ee1c23" stroke="#6a0a0c" stroke-width=".9" stroke-linejoin="round"/></svg></div>
<div class="pb" style="left:3px;top:398.5px"><svg viewBox="0 0 44 44"><path d="M11.500 19.500c.5-6 5.500-10.500 11.500-10 3 .2 5 1.200 6.500 2.500l2-2.500 2.500 10-10-1 2.500-3c-3-2.200-8-1.700-10 4z" fill="#ee1c23" stroke="#7a0d10" stroke-width=".7" stroke-linejoin="round"/><path d="M32.800 22c-.5 6-5.500 10.500-11.500 10-3-.2-5-1.200-6.500-2.500l-2 2.500-2.500-10 10 1-2.500 3c3 2.200 8 1.700 10-4z" fill="#ee1c23" stroke="#7a0d10" stroke-width=".7" stroke-linejoin="round"/></svg></div>
<div class="pb" style="left:47.25px;top:398.5px"><svg viewBox="0 0 44 44"><path d="M14.500 32.500c-7-5-7-15 0-20.500 6-4.500 15-5 19.500-.5 2 2 1 7.500-1.500 8.500l-4-1c1.500-1.500 1-3.500-1-4-5-1.500-12 3-10 11l3 4z" fill="#45433a" stroke="#14130f" stroke-width="1.300" stroke-linejoin="round"/><path d="M14 22c0-6 7-11 14-9.500-4 .5-9 4.500-9.500 9.500l5 1.500-1.500 2 5-1.500-1 5-4-.5 1.500-2-9-1z" fill="#ee1c23" stroke="#5a0a0c" stroke-width=".7"/><path d="M28.500 11.500c2-1 5.500.5 5 3.500" fill="none" stroke="#8a866b" stroke-width="1.500"/></svg></div>
<div class="pb" style="left:3px;top:442.5px"><svg viewBox="0 0 44 44"><rect x="9.300" y="7.600" width="27.400" height="26.200" fill="none" stroke="#ee2a31" stroke-width="1.100"/><rect x="9.300" y="13.400" width="21" height="20.400" fill="#8a866b" stroke="#1a1a1a" stroke-width="1.400"/><path d="M37.300 7l-2.500 10.500-2.500-2.500-6.500 6.500-4-4 6.500-6.500-2.500-2.500z" fill="#ee1c23" stroke="#3a0606" stroke-width="1" stroke-linejoin="round"/></svg></div>
<div class="pb" style="left:47.25px;top:442.5px"><svg viewBox="0 0 44 44"><path d="M8 12.500c7-7.500 19-6.500 24.500 1.500 4 6 3.500 13.500-1 18.500" fill="none" stroke="#ee2a31" stroke-width="1.600"/><path d="M11 23.500c0-4.500 3.500-8.500 8.500-8.500M26 22c1.500 4.500-.5 9-4.500 11" fill="none" stroke="#1a1a1a" stroke-width="1.500"/><path d="M32.500 9l-1 10.500-2.800-2-5 7-5.200-3.800 5-7-2.800-2z" fill="#ee1c23" stroke="#3a0606" stroke-width="1" stroke-linejoin="round"/></svg></div>
<div class="pb" style="left:3px;top:498.75px"><svg viewBox="0 0 44 44"><path d="M10.500 27.500l10-6 3 4.500-10 6.500c-2 1-4.500-3.500-3-5z" fill="#f2cf1d" stroke="#111" stroke-width="1.200"/><path d="M10.500 27.500c-1.500 1.500 1 6 3 5l1.500-1-3-5z" fill="#111"/><path d="M14.500 25.500l2.500 4.500M17 24l2.500 4.500" stroke="#111" stroke-width=".9"/><path d="M19 18c-1-5 2-9.500 8-11 4-1 8 1 8.500 5 .6 5-2.500 10-7.500 12-4 1.500-8-.5-9-6z" fill="#25231f" stroke="#000" stroke-width="1"/><path d="M22.500 19.500c-1-4 1.500-8 5-9.500 3-1 5.500 0 5.500 3 0 4-2 7.500-5.500 9-2.500 1-4.500 0-5-2.500z" fill="#9a9a9a"/><ellipse cx="28" cy="15.800" rx="3.300" ry="5" transform="rotate(35 28 15.800)" fill="#ffe91a"/></svg></div>
<div class="pb" style="left:47.25px;top:498.75px"><svg viewBox="0 0 44 44"><path d="M9.500 27.500l15-15.500" stroke="#1a1a1a" stroke-width="1.400"/><path d="M9 19.500l12.500 12M20 9l12.500 11.500" stroke="#1a1a1a" stroke-width="1.300"/><circle cx="21.500" cy="31.700" r="1.900" fill="#2fc04a"/><circle cx="32.700" cy="20.700" r="1.900" fill="#2fc04a"/><text x="0" y="0" font-family="Liberation Serif, serif" font-size="10.500" fill="#1a1a1a" transform="translate(15 16.500) rotate(-45)">3</text></svg></div>
<div class="pb" style="left:3px;top:542.75px"><svg viewBox="0 0 44 44"><path d="M9.500 21c1-8 10-13 25.500-14l-19.500 24c-4-1.500-6.500-5.500-6-10z" fill="#e9c41c" stroke="#2a2205" stroke-width="1.400" stroke-linejoin="round"/><path d="M14.500 21.500c.5-4 5-7.500 11.500-8.800l-10 12.300c-1.200-.8-1.700-2-1.500-3.500z" fill="#ececec" stroke="#2a2205" stroke-width="1.100"/><path d="M12 17l2 1M14 13.500l1.500 1.800M18 10.800l1 2M23 9l.5 2.200M11 21.500h2.200M12 26l2-.8" stroke="#5a4a05" stroke-width=".8"/></svg></div>
<div class="pb" style="left:47.25px;top:542.75px"><svg viewBox="0 0 44 44"><rect x="17" y="7" width="19" height="17.500" rx="1" fill="#fff" stroke="#333" stroke-width="1.100"/><text x="20.300" y="19.800" font-family="Liberation Serif, serif" font-weight="bold" font-size="11.500" fill="#222" letter-spacing="-.2">A1</text><path d="M17 15.800h-3.500v12" fill="none" stroke="#444" stroke-width="1"/><path d="M10.800 26.500h5.400l-2.700 5.800z" fill="#111"/></svg></div>
<div class="pb" style="left:3px;top:586.75px"><svg viewBox="0 0 44 44"><path d="M8.500 13.500l22 12.500" stroke="#f08a8a" stroke-width="1"/><path d="M9 26l21-11" stroke="#8fd79a" stroke-width="1"/><path d="M20 31.500v-9" stroke="#7aa0e0" stroke-width="1.500" stroke-dasharray="1.500 1.200"/><path d="M20 21v-8" stroke="#0a2a9a" stroke-width="2.400"/><path d="M20 6.500l3 7.500h-6z" fill="#0a2a9a"/><path d="M20 21l7-3.800" stroke="#129a33" stroke-width="2.200"/><path d="M31.500 14.500l-3 5.500-2.500-4.500z" fill="#129a33"/><path d="M20 21l7.500 4.500" stroke="#d01a1a" stroke-width="2.200"/><path d="M31.500 28.500l-6.500-.5 2.800-4.500z" fill="#d01a1a"/><circle cx="20" cy="21" r="2" fill="#111"/></svg></div>
<div class="pb" style="left:47.25px;top:586.75px"><svg viewBox="0 0 44 44"><path d="M19.500 6.500h5l9.500 24-3.500 2.500-5.500-2.500-1.500-4.500h-6l-2 4-6-2.500z" fill="#5a564a" stroke="#1a1914" stroke-width="1.200" stroke-linejoin="round"/><path d="M21.500 12l-2.500 9.500h5.500z" fill="#ececec" stroke="#1a1914" stroke-width=".8"/><path d="M24.500 6.500l2.500 1.500 9 22-2 .5z" fill="#2c2a22"/></svg></div>
<div class="pb" style="left:3px;top:642.75px"><svg viewBox="0 0 44 44"><path d="M21 7v27" stroke="#0a0a0a" stroke-width="2"/><path d="M20 12.500c-7 .5-11.500 3-11.500 6.500v5c0 3.500 6 6 12.500 6.500l1-2 2.500 4.500-6.500 2.500 1-2.500" fill="none"/><path d="M9 17.500c0-3 4.500-5.500 10.500-6v4c-3.500.3-5.500 1.200-5.500 2.500 0 1.500 3.500 3 8.500 3.200v-2.700l5 5-5 5v-2.800c-7.500-.2-13.500-2.700-13.500-6.500z" fill="#d81f26" stroke="#5a0a0c" stroke-width=".8" stroke-linejoin="round"/><path d="M9 17.500v5.500" stroke="#8e0f14" stroke-width="1.500"/><path d="M22.500 11c6 .3 11 2.800 11 6.500v5c0 3-3 5.500-8 6.500v-4.500c2.500-.8 3.500-1.800 3.500-3v-2c0-1.500-2-2.500-4.500-2.800v2.500l-4.500-4.500 4.500-4.500z" fill="#2eb34a" stroke="#0c4a1a" stroke-width=".8" stroke-linejoin="round"/><path d="M21 7v27" stroke="#0a0a0a" stroke-width="2.200"/></svg></div>
<div class="pb" style="left:47.25px;top:642.75px"><svg viewBox="0 0 44 44"><path d="M9.500 28.500c2-4 4-8 6.500-12.500 1.500-3 3.500-6 6-7.500 1-.5 2 .3 1.500 1.300l1.500-1.500c1-1 2.500-.2 2 1l1-.8c1-.8 2.500 0 2 1.200l.8-.5c1.200-.5 2.200.5 1.600 1.700l-5 9c2-1.500 4.500-2.500 6-2.300 1.300.3 1.200 1.800.2 2.300-3 1.500-5 3-7 5.500-2 2.800-5 5-9 7-3-.5-6-2-8.100-3.900z" fill="#f3dc9a" stroke="#b9a468" stroke-width="1" stroke-linejoin="round"/><path d="M24 10l-4 7M27 10.500l-4 7.500M30 12l-3.500 6.500" stroke="#c9b071" stroke-width=".9"/></svg></div>
<div class="pb" style="left:3px;top:686.75px"><svg viewBox="0 0 44 44"><path d="M12 31.500l9.500-9" stroke="#0a0a0a" stroke-width="4" stroke-linecap="round"/><circle cx="27" cy="16" r="7.500" fill="#7db0e6" stroke="#0c1320" stroke-width="2"/><circle cx="25.500" cy="14.500" r="3.500" fill="#a9cdf2" opacity=".7"/></svg></div>
<div class="pb" style="left:47.25px;top:686.75px"><svg viewBox="0 0 44 44"><rect x="10.500" y="9.500" width="24" height="24" fill="none" stroke="#e8151b" stroke-width="2" stroke-dasharray="2.200 1.800"/><path d="M11 32l9.500-9" stroke="#0a0a0a" stroke-width="4" stroke-linecap="round"/><circle cx="26" cy="16.500" r="7.500" fill="#7db0e6" stroke="#0c1320" stroke-width="2"/><circle cx="24.500" cy="15" r="3.500" fill="#a9cdf2" opacity=".7"/></svg></div>
<div class="pb" style="left:3px;top:730.75px"><svg viewBox="0 0 44 44"><path d="M9.500 7.500l7.500 1.500-2 2 4 4-2.500 2.500-4-4-2 2z" fill="#ee1c23" stroke="#6a0a0c" stroke-width=".6"/><path d="M36 7.500l-1.500 7.500-2-2-4 4-2.500-2.500 4-4-2-2z" fill="#ee1c23" stroke="#6a0a0c" stroke-width=".6"/><path d="M36 33.500l-7.500-1.500 2-2-4-4 2.500-2.500 4 4 2-2z" fill="#ee1c23" stroke="#6a0a0c" stroke-width=".6"/><path d="M11 33l8-8" stroke="#0a0a0a" stroke-width="3.600" stroke-linecap="round"/><circle cx="22.500" cy="20.500" r="5.800" fill="#7db0e6" stroke="#0c1320" stroke-width="1.800"/></svg></div>
<div class="pb" style="left:47.25px;top:730.75px"><svg viewBox="0 0 44 44"><circle cx="17.500" cy="15.500" r="7.500" fill="#9ec6ee" stroke="#0c1320" stroke-width="2"/><path d="M17 10c4-3.500 12-3 15 2 2.500 4 1.500 9-2 12l3 2.500-9.500 2 .5-9 2.500 2c2-2 2.500-5 1-7-2-2.500-6-2.500-8.500-.5z" fill="#1e7bf0" stroke="#0b3a8a" stroke-width=".8" stroke-linejoin="round"/><path d="M23.500 22l10 9.500" stroke="#0a0a0a" stroke-width="4" stroke-linecap="round"/></svg></div>
<div class="pb" style="left:3px;top:786.5px"><svg viewBox="0 0 44 44"><path d="M22 8.500c1.500 0 2.300 1 2.300 2.300 0 1-.5 1.800-1 2.200 2 1.500 3.200 6 3.200 10 0 3-.8 5.500-1.500 7h-6c-.7-1.500-1.500-4-1.500-7 0-4 1.200-8.500 3.200-10-.5-.4-1-1.200-1-2.200 0-1.300.8-2.300 2.300-2.300z" fill="#fff" stroke="#1a1a1a" stroke-width="1.200"/><path d="M18.500 21c-.7 0-1 1.500-.5 2.500M25.500 21c.7 0 1 1.500.5 2.500" stroke="#1a1a1a" stroke-width="1.200" fill="none"/><path d="M20.500 26.500l-.5 4M23.500 26.500l.5 4" stroke="#1a1a1a" stroke-width="1.300"/><path d="M15.500 35l13-8M15.500 27l13 8" stroke="#ee1c23" stroke-width="1.600"/></svg></div>
<div class="pb" style="left:47.25px;top:786.5px"><svg viewBox="0 0 44 44"><g fill="#0a0a0a"><ellipse cx="14.500" cy="17" rx="4.200" ry="6" transform="rotate(-5 14.500 17)"/><path d="M11.500 25.500l7-.5c.5 3.500-.3 7-3 7.500-3 .3-4-3.500-4-7z"/><ellipse cx="29" cy="14.500" rx="4" ry="6.200" transform="rotate(25 29 14.500)"/><path d="M23 21.500l6.500 3c-1.200 3.500-3.500 6-6 5-2.500-1.200-2-4.800-.5-8z"/></g><path d="M11 23.500l8-.6M24 19.500l7 3.200" stroke="#ececec" stroke-width="1.200"/></svg></div>
<div class="pb" style="left:3px;top:830.5px"><svg viewBox="0 0 44 44"><path d="M8 21c4-6 10-9.500 17-8.500 4 .5 7 2.500 9 5-3 5-8 8-14 8-5 0-9-1.500-12-4.500z" fill="#fff" stroke="#111" stroke-width="1"/><path d="M8 20c4-7 11-10.500 18-9.500 4 .8 7.500 3 9.500 6-3-2.500-7-3.800-11-3.800-6 0-12 2.500-16.500 7.300z" fill="#111"/><circle cx="21.500" cy="19.800" r="5.200" fill="#111"/><circle cx="21.500" cy="19.800" r="2.500" fill="#333"/><circle cx="19.800" cy="17.800" r="1.300" fill="#fff"/><path d="M10 23.500c3 4 9 6 15 4.500M13 26.500c3 2.500 8 3.500 12 2.500M30 22c2-1 3.500-2.500 4.500-4" stroke="#666" stroke-width=".8" fill="none"/></svg></div>
<div class="pb" style="left:47.25px;top:830.5px"><svg viewBox="0 0 44 44"><circle cx="21" cy="19.500" r="7.800" fill="none" stroke="#222" stroke-width="1.200"/><path d="M9 19.500h22" stroke="#111" stroke-width="1.600"/><path d="M21 11.500v16" stroke="#666" stroke-width=".9"/><path d="M27 8.500l8.500 11-8.500 11v-4.500l5-6.500-5-6.500z" fill="#0a0a0a"/><path d="M27 8.500v22" stroke="#0a0a0a" stroke-width="1"/><text x="17.300" y="17.300" font-family="Liberation Sans, sans-serif" font-size="5" fill="#333">A</text><text x="22.500" y="25.800" font-family="Liberation Sans, sans-serif" font-size="5" fill="#333">A</text></svg></div>
</div>
<div id="dlg">
<div class="th"><span style="letter-spacing:.36px;position:relative;left:-.5px">Shadow Settings</span><i style="position:absolute;left:4px;top:4px;width:12px;height:12px;border-radius:50%;background:#dcdcdc;border:1px solid #cdcdcd"></i></div>
<svg class="abs" style="left:17.800px;top:28.200px" width="26.500" height="26.500" viewBox="0 0 28 28"><rect x=".5" y=".5" width="27" height="27" fill="#3c3c3c" stroke="#222"/><path d="M3.500 10l12.500-5 8.500 9.500-4 9-11 2z" fill="#151515"/><path d="M3.500 9.500l12.500-5.500 8 10-13 6z" fill="#fff"/><path d="M11 20l13-6-3 9-8.500 2z" fill="#0a0a0a"/></svg>
<div class="abs" style="left:64.500px;top:33.500px;width:243.500px;height:17.500px;background:#fff;border-radius:4px;box-shadow:0 0 0 .5px rgba(0,0,0,.22),0 .5px 1.500px rgba(0,0,0,.3)"><span class="abs" style="left:13px;top:0;font-size:12.300px;line-height:19px;letter-spacing:.5px;color:#222;white-space:nowrap">UTC-7:00</span><div class="abs" style="right:0;top:0;width:17px;height:17.500px;border-radius:0 4px 4px 0;background:linear-gradient(#4a9bff,#1a6af0)"><svg width="17" height="17.500" viewBox="0 0.750 17 17.500"><path d="M5.500 7.800l3-3 3 3M5.500 11.200l3 3 3-3" fill="none" stroke="#fff" stroke-width="1.500" stroke-linecap="round" stroke-linejoin="round"/></svg></div></div>
<svg class="abs" style="left:327px;top:32px" width="15" height="22" viewBox="0 0 15 22"><rect x=".5" y=".5" width="14" height="21" fill="#fff" stroke="#999" stroke-width=".6"/><path d="M2.500 2.500h10l-5 5.500z" fill="#0a0a0a"/><rect x="1" y="9.500" width="13" height="12" fill="#0a0a0a"/><path d="M7.500 12v7M4 15.500h7" stroke="#fff" stroke-width="2"/></svg>
<div class="lbl" style="left:36px;top:61px;letter-spacing:.2px">Time:</div>
<div class="trk" style="left:88px;top:68.500px;width:163px"><i style="width:84px"></i></div>
<div class="knob" style="left:167.500px;top:62px"></div>
<div class="sm" style="left:88px;top:78px;letter-spacing:.55px">05:20 AM</div>
<div class="sm" style="left:198px;top:78px;letter-spacing:.42px">06:47 PM</div>
<div class="fld" style="top:63px"><span class="abs" style="left:3px;top:2.500px;width:72px;height:18px;background:#dcdcdc"></span><span class="abs" style="left:5px;top:0;letter-spacing:.15px">12:36 PM</span></div>
<div class="lbl" style="left:38px;top:90.500px;letter-spacing:.2px">Date:</div>
<div class="trk" style="left:88px;top:98px;width:163px"><i style="width:98px"></i></div>
<div class="knob" style="left:181px;top:91.500px"></div>
<div class="mo" style="left:85px;top:110px;word-spacing:0"><span style="letter-spacing:9.050px">JFMAMJJASOND</span></div>
<div class="fld" style="top:93px"><span class="abs" style="left:4px;top:0;letter-spacing:.5px">08/19</span></div>
</div>

<svg class="abs" style="left:0;top:0;pointer-events:none" width="1920" height="1200" viewBox="0 0 1920 1200">
<!-- annotation arrow + ellipse -->
<polygon points="755.8,188.6 895.5,216.2 897.5,203.5 931,228 887.5,240 890,227.5 754,196.800" fill="#ff1ab3"/>
<ellipse cx="1172.500" cy="251.300" rx="227.200" ry="111.200" fill="none" stroke="#ff1ab3" stroke-width="7.200"/>
</svg>

<div id="status">
<svg class="abs" style="left:5px;top:7px" width="135" height="30" viewBox="5 1169 135 30">
<circle cx="21" cy="1182.500" r="10.600" fill="#e2e2e2" stroke="#8e8e8e" stroke-width="1.400"/>
<path d="M21 1175.500c2.600 0 4.200 1.900 4.200 4.200 0 2.500-2 4-3 6.500l-1.200 3-1.200-3c-1-2.500-3-4-3-6.500 0-2.300 1.600-4.200 4.200-4.200z" fill="#9a9a9a"/><circle cx="21" cy="1179.500" r="1.700" fill="#e2e2e2"/>
<circle cx="53.300" cy="1182.500" r="10.600" fill="#e2e2e2" stroke="#8e8e8e" stroke-width="1.400"/>
<circle cx="53.300" cy="1177" r="1.800" fill="#9a9a9a"/><path d="M49.800 1180.500h7v5h-1.500v4.500h-4v-4.500h-1.500z" fill="#9a9a9a"/>
<circle cx="85.400" cy="1182.500" r="10.600" fill="#fff" stroke="#0a0a0a" stroke-width="1.800"/>
<circle cx="85.400" cy="1179" r="3.800" fill="#0a0a0a"/><path d="M78 1189c.5-4 3.500-5.800 7.400-5.800s6.900 1.800 7.400 5.800c-2 2.200-4.500 3.300-7.400 3.300s-5.400-1.100-7.400-3.300z" fill="#0a0a0a"/>
<path d="M103.500 1171v24" stroke="#d4d4d4" stroke-width="1"/>
<circle cx="121.600" cy="1182.500" r="11" fill="#0c2f86" stroke="#05060c" stroke-width="1.800"/>
<text x="121.600" y="1188.500" text-anchor="middle" font-family="Liberation Sans, sans-serif" font-weight="bold" font-size="16" fill="#05060c">?</text>
</svg>
<div class="txt"><span style="letter-spacing:.43px">Select objects. Shift to extend select. Drag mouse to select multiple.</span></div>
<div class="meas"><span style="letter-spacing:.5px">Measurements</span></div>
<div class="fld"></div>
</div>

<div class="corner" style="left:0;top:1194px;background:radial-gradient(circle at 100% 0,rgba(0,0,0,0) 5.500px,#111 6.500px)"></div>
<div class="corner" style="left:1914px;top:1194px;background:radial-gradient(circle at 0 0,rgba(0,0,0,0) 5.500px,#111 6.500px)"></div>
<div class="corner" style="left:0;top:30px;background:radial-gradient(circle at 100% 100%,rgba(0,0,0,0) 5.500px,#3a3a3a 6.500px)"></div>
<div class="corner" style="left:1914px;top:30px;background:radial-gradient(circle at 0 100%,rgba(0,0,0,0) 5.500px,#3a3a3a 6.500px)"></div>
</body>
</html>
